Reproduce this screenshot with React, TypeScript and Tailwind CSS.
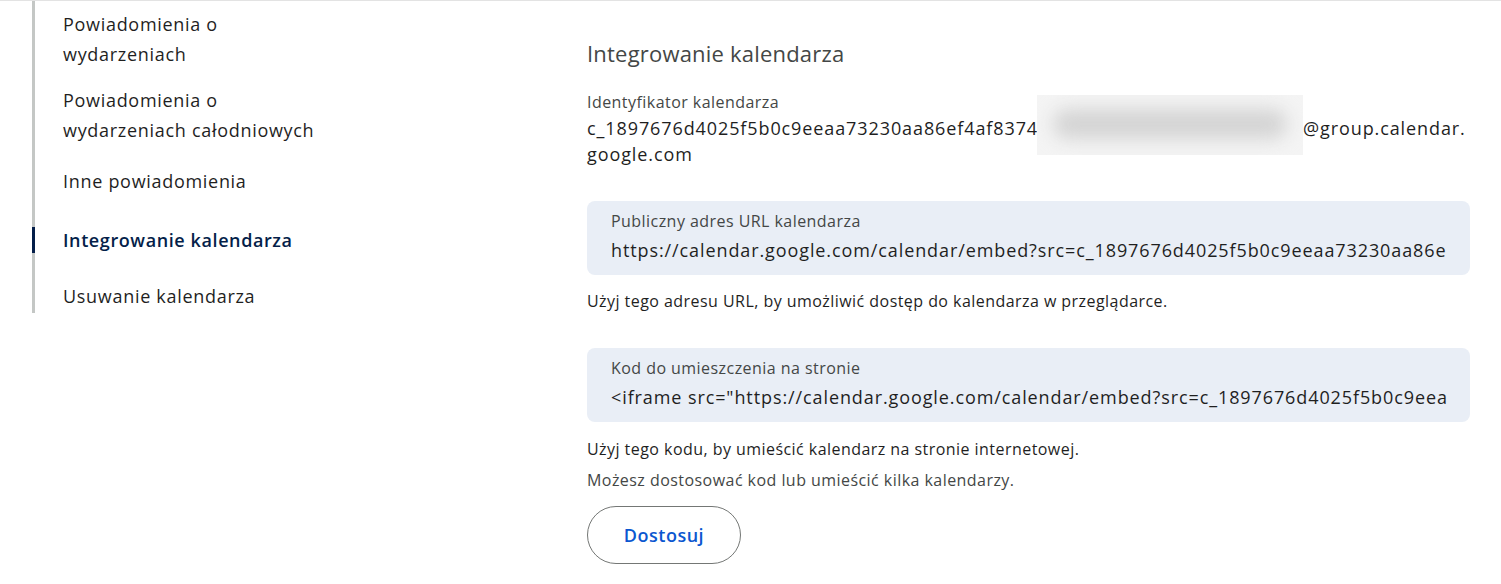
import React from 'react';

type NavItem = { label: React.ReactNode; active?: boolean; spacing: string };

const navItems: NavItem[] = [
  { label: <>Powiadomienia o<br />wydarzeniach</>, spacing: 'pt-[9px]' },
  { label: <>Powiadomienia o<br />wydarzeniach całodniowych</>, spacing: 'mt-[17px]' },
  { label: 'Inne powiadomienia', spacing: 'mt-[22px]' },
  { label: 'Integrowanie kalendarza', active: true, spacing: 'mt-[30px]' },
  { label: 'Usuwanie kalendarza', spacing: 'mt-[29px]' },
];

const calendarId = 'c_1897676d4025f5b0c9eeaa73230aa86ef4af8374';
const publicUrl = 'https://calendar.google.com/calendar/embed?src=c_1897676d4025f5b0c9eeaa73230aa86e';
const embedCode = '<iframe src="https://calendar.google.com/calendar/embed?src=c_1897676d4025f5b0c9eea';

const SideNav: React.FC = () => (
  <nav className="w-[587px] shrink-0 pl-[32px]">
    <div className="h-[312px] border-l-[3px] border-[#c4c7c5]">
      {navItems.map((item, i) =>
        item.active ? (
          <div
            key={i}
            className={`${item.spacing} -ml-[3px] border-l-[3px] border-[#041e49] pl-[28px] text-[18px] leading-[26px] font-semibold tracking-[0.6px] text-[#041e49]`}
          >
            {item.label}
          </div>
        ) : (
          <div
            key={i}
            className={`${item.spacing} pl-[28px] text-[18px] leading-[29.5px] tracking-[0.7px] text-[#1f1f1f]`}
          >
            {item.label}
          </div>
        )
      )}
    </div>
  </nav>
);

const CopyField: React.FC<{ label: string; value: string }> = ({ label, value }) => (
  <div className="rounded-[8px] bg-[#e9eef6] pl-[24px] pr-[20px] pt-[10px] pb-[12px]">
    <div className="text-[16px] leading-[20px] tracking-[0.45px] text-[#444746]">{label}</div>
    <div className="mt-[6px] overflow-hidden whitespace-nowrap text-[18px] leading-[26px] tracking-[0.9px] text-[#1f1f1f]">
      {value}
    </div>
  </div>
);

const App: React.FC = () => {
  return (
    <div
      className="flex h-[584px] w-full overflow-hidden border-t border-[#e3e3e3] bg-white"
      style={{ fontFamily: '"Open Sans", Roboto, Arial, sans-serif' }}
    >
      <SideNav />

      <main className="w-[883px] shrink-0 pt-[37px]">
        <h2 className="text-[22px] leading-[30px] font-normal tracking-[0.2px] text-[#444746]">Integrowanie kalendarza</h2>

        <div className="mt-[24px] text-[16px] leading-[20px] tracking-[0.45px] text-[#444746]">Identyfikator kalendarza</div>
        <div className="mt-[3px] text-[18px] leading-[26px] tracking-[0.9px] text-[#1f1f1f]">
          <div className="flex items-start">
            <span className="inline-block w-[450px] overflow-hidden whitespace-nowrap">{calendarId}</span>
            {/* hidden part of the id */}
            <span className="relative inline-block h-[26px] w-[266px]">
              <span className="absolute left-0 right-0 top-[-20px] h-[60px] overflow-hidden bg-[#f4f4f4]">
                <span className="absolute left-[16px] right-[16px] top-[14px] h-[30px] rounded-full bg-[#d4d4d4] blur-[9px]" />
              </span>
            </span>
            <span>@group.calendar.</span>
          </div>
          <div>google.com</div>
        </div>

        <div className="mt-[34px]">
          <CopyField label="Publiczny adres URL kalendarza" value={publicUrl} />
        </div>
        <p className="mt-[16px] text-[16px] leading-[20px] tracking-[0.45px] text-[#1f1f1f]">
          Użyj tego adresu URL, by umożliwić dostęp do kalendarza w przeglądarce.
        </p>

        <div className="mt-[37px]">
          <CopyField label="Kod do umieszczenia na stronie" value={embedCode} />
        </div>
        <p className="mt-[17px] text-[16px] leading-[20px] tracking-[0.45px] text-[#1f1f1f]">
          Użyj tego kodu, by umieścić kalendarz na stronie internetowej.
        </p>
        <p className="mt-[11px] text-[16px] leading-[20px] tracking-[0.45px] text-[#444746]">
          Możesz dostosować kod lub umieścić kilka kalendarzy.
        </p>

        <button className="mt-[16px] h-[58px] w-[154px] rounded-full border border-[#747775] bg-white text-[18px] font-semibold tracking-[0.5px] text-[#0b57d0]">
          Dostosuj
        </button>
      </main>
    </div>
  );
};

export default App;
